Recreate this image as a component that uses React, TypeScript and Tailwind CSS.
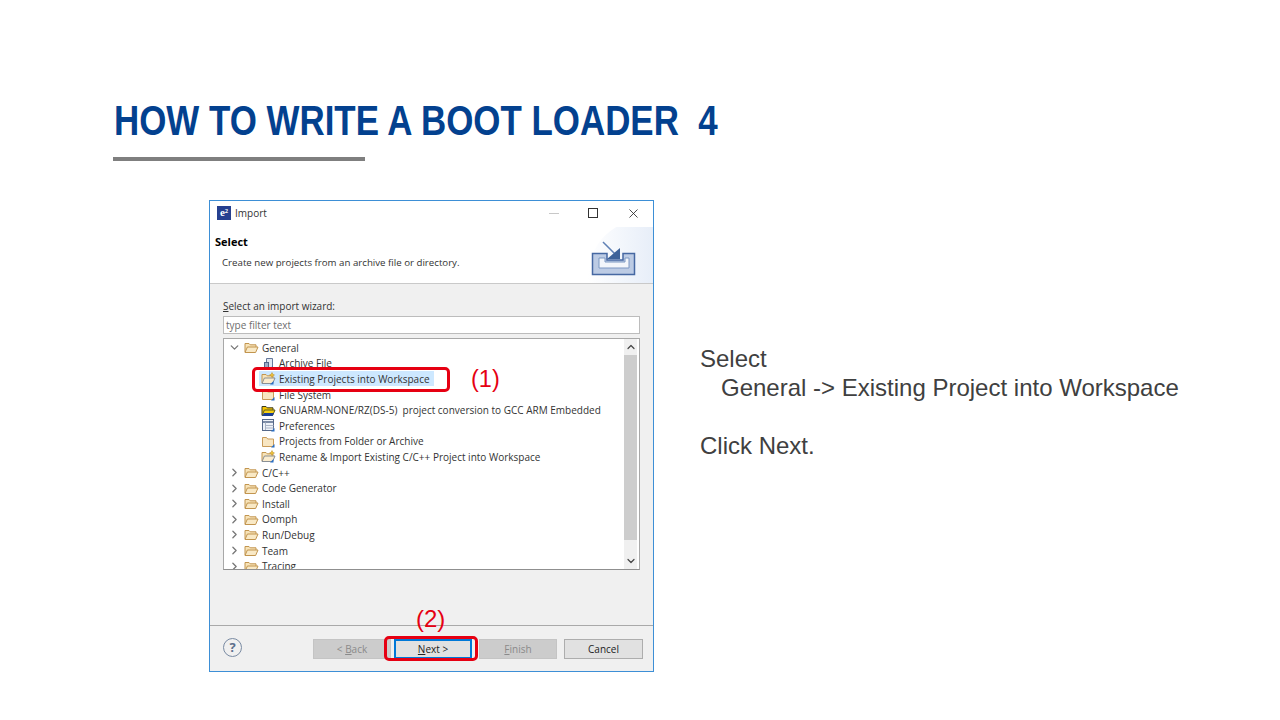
import React from "react";
import { ChevronDown, ChevronRight, ChevronUp, X } from "lucide-react";

const uiFont = "font-['Open_Sans','Noto_Sans',sans-serif]";

function Folder({ tone = "open" }: { tone?: "open" | "closed" | "dark" | "project" }) {
  if (tone === "dark") {
    return (
      <svg width="15" height="13" viewBox="0 0 15 13" className="shrink-0">
        <path d="M1 11V2.5h4l1.2 1.3H12V6" fill="#f5c400" stroke="#3a3a20" />
        <path d="M1 11.5 3.4 6H14l-2.4 5.5z" fill="#f5cf10" stroke="#5a5a20" />
        <path d="M1 12h10.5l1.5-3H3z" fill="#1c3f94" />
      </svg>
    );
  }
  if (tone === "closed") {
    return (
      <svg width="15" height="13" viewBox="0 0 15 13" className="shrink-0">
        <path d="M1.5 11.5V2.5h4l1.2 1.5h5.8v7.5z" fill="#f8e6c2" stroke="#c99b58" />
        <path d="M10 12.5l3.5-3.5v3.5z" fill="#2a6fc4" />
      </svg>
    );
  }
  return (
    <svg width="15" height="13" viewBox="0 0 15 13" className="shrink-0">
      <path d="M1 11V2.5h4l1.2 1.3H12V6" fill="#f7e3b8" stroke="#c2954f" />
      <path d="M1 11.5 3.4 6H14l-2.4 5.5z" fill={tone === "project" ? "#fbeccd" : "#f9e9c6"} stroke={tone === "project" ? "#8a8f94" : "#c2954f"} />
      {tone === "project" && <path d="M11 0.5l.8 1.7 1.7.8-1.7.8-.8 1.7-.8-1.7-1.7-.8 1.7-.8z" fill="#f1c232" stroke="#b98f2a" strokeWidth="0.5" />}
      {tone === "project" && <path d="M9 12.5l3.5-3.5v3.5z" fill="#2a6fc4" />}
    </svg>
  );
}

function FileIcon() {
  return (
    <svg width="15" height="13" viewBox="0 0 15 13" className="shrink-0">
      <path d="M5.5 1.5h6v10h-6z" fill="#dfe6f0" stroke="#66789a" />
      <rect x="3.5" y="5.5" width="4" height="6" fill="#9cadc8" stroke="#54668a" />
      <path d="M8 12.5l3.5-3.5v3.5z" fill="#2a6fc4" />
    </svg>
  );
}

function PrefIcon() {
  return (
    <svg width="15" height="13" viewBox="0 0 15 13" className="shrink-0">
      <rect x="1.5" y="0.5" width="11" height="11" fill="#eef2f8" stroke="#56698a" />
      <path d="M1.5 3h11" stroke="#56698a" strokeWidth="1.5" />
      <path d="M4.5 3.5V11M4.5 6.5h8M4.5 9h8" stroke="#aab4c6" />
      <path d="M10 12.5l3.5-3.5v3.5z" fill="#2a6fc4" />
    </svg>
  );
}

type Row = { label: string; icon: React.ReactNode; child?: boolean; arrow?: "down" | "right"; selected?: boolean };

const rows: Row[] = [
  { label: "General", icon: <Folder />, arrow: "down" },
  { label: "Archive File", icon: <FileIcon />, child: true },
  { label: "Existing Projects into Workspace", icon: <Folder tone="project" />, child: true, selected: true },
  { label: "File System", icon: <Folder tone="closed" />, child: true },
  { label: "GNUARM-NONE/RZ(DS-5)  project conversion to GCC ARM Embedded", icon: <Folder tone="dark" />, child: true },
  { label: "Preferences", icon: <PrefIcon />, child: true },
  { label: "Projects from Folder or Archive", icon: <Folder tone="closed" />, child: true },
  { label: "Rename & Import Existing C/C++ Project into Workspace", icon: <Folder tone="project" />, child: true },
  { label: "C/C++", icon: <Folder />, arrow: "right" },
  { label: "Code Generator", icon: <Folder />, arrow: "right" },
  { label: "Install", icon: <Folder />, arrow: "right" },
  { label: "Oomph", icon: <Folder />, arrow: "right" },
  { label: "Run/Debug", icon: <Folder />, arrow: "right" },
  { label: "Team", icon: <Folder />, arrow: "right" },
  { label: "Tracing", icon: <Folder />, arrow: "right" },
];

function TreeRow({ row }: { row: Row }) {
  return (
    <div className={`flex h-[15.6px] items-center shrink-0 ${row.child ? "pl-[37px]" : "pl-[4px]"}`}>
      {!row.child && (
        <span className="w-[16px] shrink-0 text-[#777]">
          {row.arrow === "down" ? <ChevronDown size={13} strokeWidth={2.4} /> : <ChevronRight size={13} strokeWidth={2.4} />}
        </span>
      )}
      <span className={`flex items-center gap-[3px] h-[15px] ${row.selected ? "bg-[#cde8ff] -ml-[2px] pl-[2px] pr-[4px]" : ""}`}>
        {row.icon}
        <span className="whitespace-pre text-[10px] leading-[14px] text-[#333]">{row.label}</span>
      </span>
    </div>
  );
}

function DialogButton({ before = "", under = "", rest, disabled, focus, wide }: { before?: string; under?: string; rest: string; disabled?: boolean; focus?: boolean; wide?: boolean }) {
  let look = "bg-[#e1e1e1] border border-[#adadad] text-[#222]";
  if (disabled) look = "bg-[#cccccc] border border-[#c4c4c4] text-[#8a8a8a]";
  if (focus) look = "bg-[#e1e1e1] border-2 border-[#0078d7] text-[#222]";
  return (
    <div className={`h-[20px] flex items-center justify-center whitespace-pre text-[10px] ${wide ? "w-[79px]" : "w-[78px]"} ${look}`}>
      {before}
      <span className="underline">{under}</span>
      {rest}
    </div>
  );
}

export default function App() {
  return (
    <div className="w-[1280px] h-[720px] bg-white overflow-hidden font-['Liberation_Sans',Arial,sans-serif] pt-[96px] pl-[113px]">
      <h1 className="ml-px text-[42px] leading-[50px] font-bold text-[#03418f] whitespace-pre origin-left scale-x-[0.831]">HOW TO WRITE A BOOT LOADER  4</h1>
      <div className="mt-[11px] h-[4px] w-[252px] bg-[#7f7f7f]" />

      <div className="flex mt-[39px] pl-[96px]">
        {/* dialog */}
        <div className={`relative w-[445px] h-[472px] shrink-0 border border-[#3d8fd6] bg-[#f0f0f0] flex flex-col ${uiFont}`}>
          <div className="h-[26px] bg-white flex items-center pl-[7px] pb-[2px] shrink-0">
            <span className="w-[14px] h-[14px] bg-[#26408f] text-white text-[11px] leading-[13px] font-bold text-center font-['Liberation_Serif',serif]">e²</span>
            <span className="ml-[4px] text-[10px] text-[#333]">Import</span>
            <span className="ml-auto flex items-center pr-[12px] text-[#222]">
              <span className="w-[10px] h-px bg-[#c8c8c8]" />
              <span className="ml-[29px] w-[10px] h-[10px] border-[1.5px] border-[#333]" />
              <X size={15} strokeWidth={1.3} className="ml-[28px]" />
            </span>
          </div>

          <div className="relative h-[57px] bg-white border-b border-[#c9c9c9] shrink-0 overflow-hidden">
            <div className="absolute right-[-50px] top-[-8px] w-[115px] h-[115px] rounded-full bg-gradient-to-r from-white to-[#d5e1f3]" />
            <div className="relative pl-[5px] pt-[8px] text-[11px] leading-[14px] font-bold text-black">Select</div>
            <div className="relative pl-[12px] pt-[7px] text-[9.7px] leading-[14px] text-[#333]">Create new projects from an archive file or directory.</div>
            <svg width="48" height="38" viewBox="0 0 48 38" className="absolute left-[380px] top-[13px]">
              <path d="M2.5 13.5H17V20H33V13.5H44.5V34.5H2.5Z" fill="#bccbe4" stroke="#4668a2" strokeWidth="1.5" />
              <path d="M9 18V28H39V18H35V22H15V18Z" fill="#f3f6fb" stroke="#7d98c3" />
              <path d="M13 2l15 15" stroke="#5f80b5" strokeWidth="1.5" />
              <path d="M30 8v11H17z" fill="#3d6299" />
            </svg>
          </div>

          <div className="flex-1 px-[13px] pt-[15px] flex flex-col min-h-0">
            <div className="text-[10px] leading-[14px] text-[#333]"><span className="underline">S</span>elect an import wizard:</div>
            <div className="mt-[3px] h-[18px] border border-[#bcbcbc] bg-white text-[10px] leading-[16px] pl-[2px] text-[#6e6e6e]">type filter text</div>
            <div className="relative mt-[4px] h-[232px] border border-[#a8a8a8] border-b-[#8f8f8f] bg-white overflow-hidden flex flex-col pt-[1px]">
              {rows.map((row) => (
                <TreeRow key={row.label} row={row} />
              ))}
              <div className="absolute right-[2px] top-0 bottom-0 w-[13px] bg-[#f0f0f0] flex flex-col items-center justify-between py-[2px] text-[#444]">
                <ChevronUp size={12} strokeWidth={2.4} />
                <ChevronDown size={12} strokeWidth={2.4} />
                <div className="absolute left-0 right-0 top-[16px] h-[185px] bg-[#cdcdcd]" />
              </div>
            </div>
          </div>

          <div className="h-[46px] border-t border-[#a9a9a9] shrink-0 flex items-start pt-[13px] pl-[13px] pr-[10px]">
            <span className="w-[19px] h-[19px] -mt-[1px] rounded-full border-[1.5px] border-[#7a8ba3] text-[#5b6e8c] text-[13px] leading-[16px] font-bold text-center">?</span>
            <div className="ml-auto flex text-[10px]">
              <DialogButton before="< " under="B" rest="ack" disabled />
              <div className="w-[3px]" />
              <DialogButton under="N" rest="ext >" focus />
              <div className="w-[7px]" />
              <DialogButton under="F" rest="inish" disabled />
              <div className="w-[7px]" />
              <DialogButton rest="Cancel" wide />
            </div>
          </div>

          {/* red annotations */}
          <div className="absolute left-[42px] top-[166px] w-[198px] h-[25px] rounded-[5px] border-[3px] border-[#e60012]" />
          <div className="absolute left-[261px] top-[164px] text-[23.5px] leading-[28px] text-[#e60012] font-['Liberation_Sans',sans-serif]">(1)</div>
          <div className="absolute left-[174px] top-[435px] w-[94px] h-[25px] rounded-[5px] border-[3px] border-[#e60012]" />
          <div className="absolute left-[206px] top-[404px] text-[24px] leading-[28px] text-[#e60012] font-['Liberation_Sans',sans-serif]">(2)</div>
        </div>

        {/* instructions */}
        <div className="ml-[46px] mt-[144px] text-[24px] leading-[29px] text-[#404040] whitespace-pre">
          <div>Select</div>
          <div className="pl-[21px]">General -&gt; Existing Project into Workspace</div>
          <div className="h-[29px]" />
          <div>Click Next.</div>
        </div>
      </div>
    </div>
  );
}
